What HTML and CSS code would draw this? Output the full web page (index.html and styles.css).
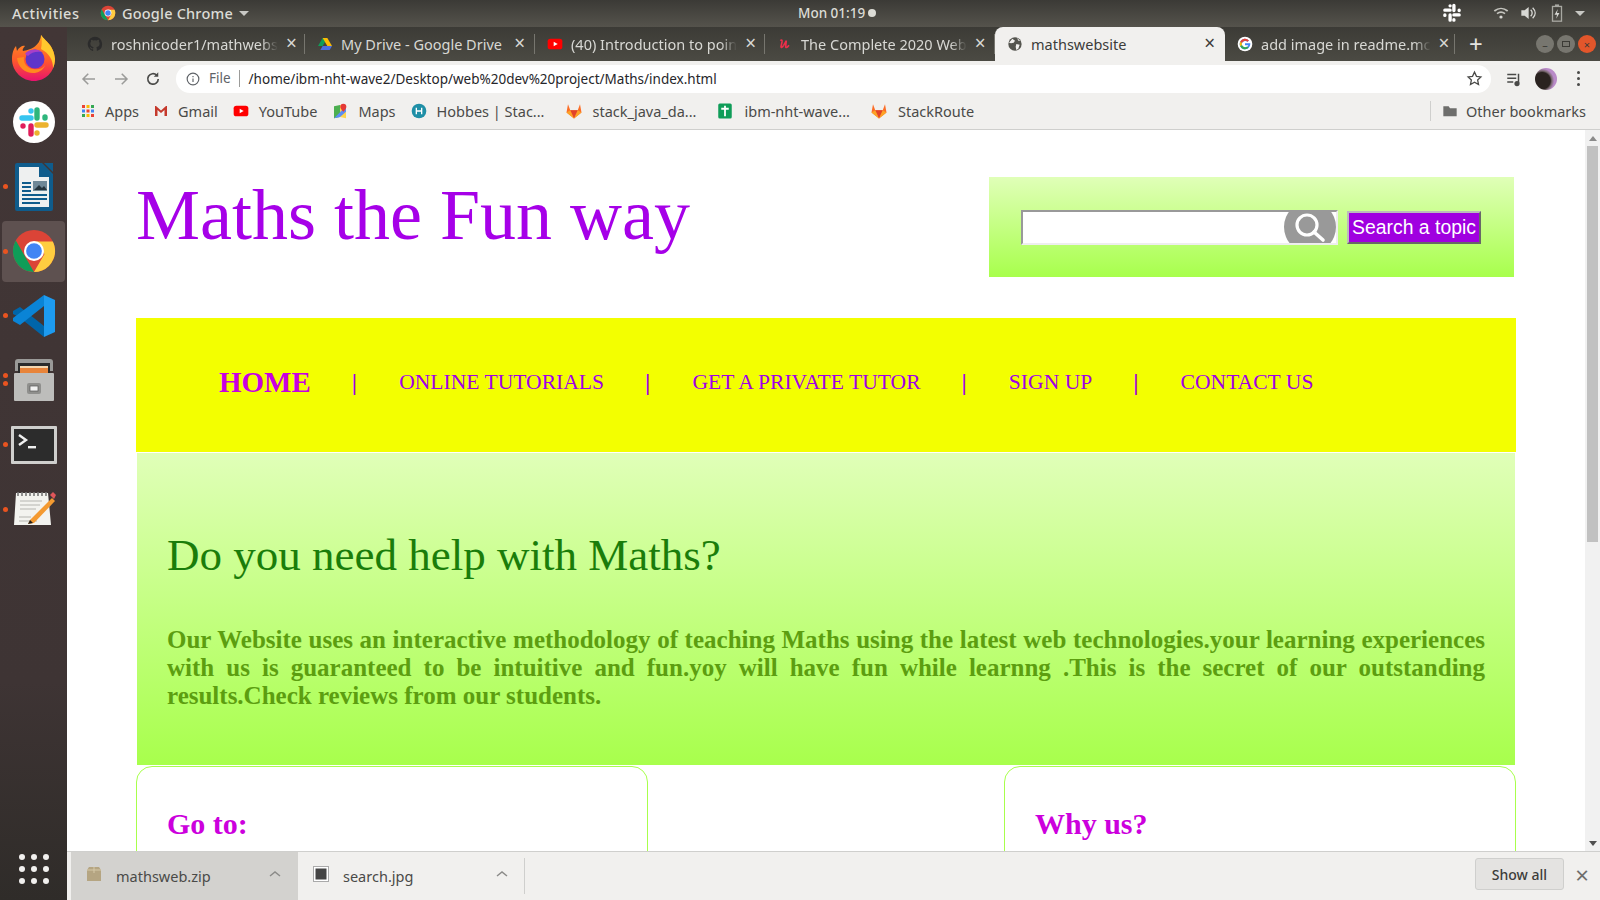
FILE: index.html
```html
<!DOCTYPE html>
<html lang="en">
<head>
    <meta charset="UTF-8">
    <meta name="viewport" content="width=device-width, initial-scale=1.0">
    <title>mathswebsite</title>
    <link rel="stylesheet" href="styles.css">
</head>
<body>
    <div class="topbar">
        <span class="activities">Activities</span>
        <span class="appmenu">
            <svg class="ico16" viewBox="0 0 24 24"><use href="#chrome"/></svg>
            Google Chrome
            <span class="caret"></span>
        </span>
        <span class="clock">Mon 01:19 <i class="dot"></i></span>
        <span class="tray">
            <svg width="20" height="20" viewBox="0 0 42 42"><g stroke="#fff" stroke-width="7" stroke-linecap="round" fill="none"><path d="M17 6v0M17 15H6"/><path d="M25 5v11M36 15v1"/><path d="M25 25h11M25 35v1"/><path d="M17 25v11M6 25v1"/></g></svg>
            <svg class="wifi" width="16" height="16" viewBox="0 0 24 24" fill="none" stroke="#c4c4be" stroke-width="2.6"><path d="M2 9c6-5 14-5 20 0M6 13c4-3 8-3 12 0"/><circle cx="12" cy="18" r="2.4" fill="#d8d8d4" stroke="none"/></svg>
            <svg class="volume" width="16" height="16" viewBox="0 0 24 24" fill="#d8d8d4"><path d="M2 8h5l6-5v18l-6-5H2z"/><path d="M16 7c3 3 3 7 0 10M19 4c5 5 5 11 0 16" fill="none" stroke="#d8d8d4" stroke-width="2"/></svg>
            <svg width="14" height="18" viewBox="0 0 14 22"><rect x="1.5" y="3" width="11" height="18" fill="none" stroke="#a8a8a2" stroke-width="1.6"/><rect x="4.5" y="0.5" width="5" height="3" fill="#a8a8a2"/><path d="M8 6l-4 7h3l-1 5 4-7H7z" fill="#d8d8d4"/></svg>
            <span class="caret"></span>
        </span>
    </div>

    <div class="desktop">
        <div class="dock">
            <div class="dockitem">
                <svg width="48" height="48" viewBox="0 0 48 48">
                    <defs><linearGradient id="fx" x1="0" y1="0" x2="0" y2="1"><stop offset="0" stop-color="#ff9a1f"/><stop offset=".55" stop-color="#ff5a2b"/><stop offset="1" stop-color="#e8126e"/></linearGradient></defs>
                    <path d="M31 1c4 6 13 10 14 24 0 13-10 22-21 22S2 38 2 25c0-6 2-11 4-13l1 5c2-4 6-6 8-5-2 2-3 4-2 5 6-1 17-4 18-16z" fill="url(#fx)"/>
                    <path d="M31 1c4 6 13 10 14 24 0 3-1 7-2 9 0-8-4-15-12-19 1-5 1-10 0-14z" fill="#ffc92e"/>
                    <circle cx="25" cy="25" r="9.5" fill="#5e35c8"/>
                    <path d="M15 20c3-5 12-6 17-2-5-1-11 0-14 4z" fill="#a83fc8"/>
                    <path d="M7 24c1 10 9 16 18 15 5-1 9-4 10-8-2 4-7 5-12 4-6-1-10-6-9-12z" fill="#ff8a1f"/>
                </svg>
            </div>
            <div class="dockitem">
                <svg width="42" height="42" viewBox="0 0 42 42">
                    <circle cx="21" cy="21" r="21" fill="#fff"/>
                    <g stroke-width="5.4" stroke-linecap="round" fill="none">
                        <path d="M18 10v0M18 17H9" stroke="#36c5f0"/>
                        <path d="M24 9v8M32 16v1" stroke="#2eb67d"/>
                        <path d="M24 24h9M24 32v0" stroke="#ecb22e"/>
                        <path d="M18 25v8M10 25v0" stroke="#e01e5a"/>
                    </g>
                </svg>
            </div>
            <div class="dockitem">
                <i class="run"></i>
                <svg width="40" height="50" viewBox="0 0 40 50">
                    <path d="M1 3a2 2 0 0 1 2-2h25l11 11v35a2 2 0 0 1-2 2H3a2 2 0 0 1-2-2z" fill="#0f5c8c"/>
                    <path d="M5 5h20v10h10v30H5z" fill="#eef0f0"/>
                    <path d="M30 1l9 0v9z" fill="#0f5c8c"/>
                    <rect x="19" y="19" width="14" height="10" fill="#6f8796"/><path d="M20 28l5-5 3 3 2-2 3 4z" fill="#26343c"/>
                    <path d="M8 21h9M8 25h9M8 29h9M8 33h25M8 37h25M8 41h18" stroke="#0f5c8c" stroke-width="2"/>
                </svg>
            </div>
            <div class="dockitem active">
                <i class="run"></i>
                <svg width="46" height="46" viewBox="0 0 24 24"><use href="#chrome"/></svg>
            </div>
            <div class="dockitem">
                <i class="run"></i>
                <svg width="44" height="44" viewBox="0 0 44 44">
                    <path d="M32 43V32L8 13l-7 4v3l6 3z" fill="#0065a9"/>
                    <path d="M32 1v11L8 31l-7-4v-3z" fill="#0a84d6"/>
                    <path d="M32 1l11 5v32l-11 5z" fill="#1d9bf0"/>
                </svg>
            </div>
            <div class="dockitem">
                <i class="run two"></i>
                <svg width="44" height="44" viewBox="0 0 44 44">
                    <path d="M3 4a3 3 0 0 1 3-3h32a3 3 0 0 1 3 3v9H3z" fill="#9a9a98"/>
                    <rect x="6" y="5" width="32" height="11" fill="#2b2b2b"/>
                    <rect x="8" y="8" width="28" height="7" fill="#e8843a"/><rect x="8" y="8" width="28" height="2" fill="#f4d7b0"/>
                    <rect x="2" y="15" width="40" height="28" rx="1" fill="#bdbdbb"/>
                    <rect x="15" y="25" width="14" height="11" rx="2" fill="#8f8f8d"/>
                    <rect x="18" y="28" width="8" height="5" fill="#f2f2f2" stroke="#555" stroke-width=".7"/>
                </svg>
            </div>
            <div class="dockitem">
                <i class="run"></i>
                <svg width="46" height="38" viewBox="0 0 46 38">
                    <rect width="46" height="38" rx="1" fill="#cfcfcd"/>
                    <rect x="3" y="3" width="40" height="32" fill="#2c2c2c"/>
                    <path d="M8 9l7 5-7 5" fill="none" stroke="#f0f0f0" stroke-width="2.4"/>
                    <rect x="17" y="20" width="8" height="2.4" fill="#f0f0f0"/>
                </svg>
            </div>
            <div class="dockitem">
                <i class="run"></i>
                <svg width="44" height="40" viewBox="0 0 44 40">
                    <path d="M4 4h32l3 32H2z" fill="#f3f3ef"/>
                    <path d="M6 3v4M10 3v4M14 3v4M18 3v4M22 3v4M26 3v4M30 3v4M34 3v4" stroke="#777" stroke-width="1.6"/>
                    <path d="M8 12h22M8 16h20M8 20h16M7 28h12M7 32h18" stroke="#b5b5b0" stroke-width="1"/>
                    <path d="M18 31l22-22 3 3-21 22-6 1z" fill="#f49a31"/>
                    <path d="M38 6l3-3 3 3-2 4z" fill="#e0565a"/>
                    <path d="M16 35l2-4 3 3z" fill="#222"/>
                </svg>
            </div>
            <div class="grid9">
                <i></i><i></i><i></i><i></i><i></i><i></i><i></i><i></i><i></i>
            </div>
        </div>

        <div class="browser">
            <div class="tabstrip">
                <div class="tab">
                    <svg class="ico16" viewBox="0 0 24 24"><path fill="#2b2b2b" d="M12 1a11 11 0 0 0-3.500 21.400c.5.100.7-.2.7-.5v-2c-3 .7-3.700-1.300-3.700-1.300-.5-1.300-1.200-1.600-1.200-1.600-1-.7.100-.7.100-.7 1.100.1 1.700 1.100 1.700 1.100 1 1.700 2.600 1.200 3.200.9.100-.7.400-1.200.7-1.500-2.400-.3-5-1.200-5-5.400 0-1.200.4-2.200 1.100-2.900-.1-.3-.5-1.400.1-2.900 0 0 .9-.3 3 1.100a10.500 10.500 0 0 1 5.500 0c2.100-1.400 3-1.100 3-1.100.6 1.500.2 2.600.1 2.900.7.700 1.100 1.700 1.100 2.900 0 4.200-2.600 5.100-5 5.400.4.300.8 1 .8 2v3c0 .3.200.6.700.5A11 11 0 0 0 12 1z"/></svg>
                    <span class="tabtitle">roshnicoder1/mathwebs</span>
                    <span class="tabx">×</span>
                </div>
                <div class="tab">
                    <svg class="ico16" viewBox="0 0 24 24"><path d="M8.500 3h7l-7 12h-7z" fill="#0f9d58"/><path d="M15.500 3l7 12h-7l-7-12z" fill="#fbbc04"/><path d="M5 21l3.500-6h14L19 21z" fill="#4a6ee0"/></svg>
                    <span class="tabtitle plain">My Drive - Google Drive</span>
                    <span class="tabx">×</span>
                </div>
                <div class="tab">
                    <svg class="ico16" viewBox="0 0 24 24"><rect x="1" y="4" width="22" height="16" rx="4" fill="#f00"/><path d="M10 8.500l6 3.500-6 3.500z" fill="#fff"/></svg>
                    <span class="tabtitle">(40) Introduction to poin</span>
                    <span class="tabx">×</span>
                </div>
                <div class="tab">
                    <svg class="ico16" viewBox="0 0 24 24"><path d="M5 7c2-2 3-1 2.500 2L6 16c0 2 2 1 4-2l4-7-1 9c0 2 2 2 5-2" fill="none" stroke="#ec2f4b" stroke-width="2.400"/></svg>
                    <span class="tabtitle">The Complete 2020 Web</span>
                    <span class="tabx">×</span>
                </div>
                <div class="tab current">
                    <svg class="ico16" viewBox="0 0 24 24"><circle cx="12" cy="12" r="10" fill="#55554f"/><path d="M8 4l4 3-2 3-4 1-3-1M14 12l5 1-2 6-3 2-1-5zM15 3l2 4 3 0" fill="#f1f0ee"/></svg>
                    <span class="tabtitle plain">mathswebsite</span>
                    <span class="tabx">×</span>
                </div>
                <div class="tab last">
                    <svg class="ico16" viewBox="0 0 24 24"><circle cx="12" cy="12" r="11" fill="#fff"/><path d="M12 11v3h5a5 5 0 1 1-1.300-5.200l2.200-2.200A8 8 0 1 0 20 12c0-.4 0-.7-.1-1z" fill="#4285f4"/><path d="M4.800 8.500l2.600 2a5 5 0 0 1 8.300-1.700l2.200-2.200a8 8 0 0 0-13.100 1.900z" fill="#ea4335"/><path d="M4.800 15.500a8 8 0 0 0 12.700 2.300l-2.400-2a5 5 0 0 1-7.700-2.300z" fill="#34a853"/><path d="M4.800 8.500a8 8 0 0 0 0 7l2.600-2a5 5 0 0 1 0-3z" fill="#fbbc04"/></svg>
                    <span class="tabtitle">add image in readme.mc</span>
                    <span class="tabx">×</span>
                </div>
                <span class="newtab">+</span>
                <span class="winbtns">
                    <i class="winbtn">–</i><i class="winbtn"><b class="winmax"></b></i><i class="winbtn close">×</i>
                </span>
            </div>

            <div class="toolbar">
                <svg class="navico" viewBox="0 0 24 24" fill="none" stroke="#9b9b99" stroke-width="2"><path d="M20 12H5M11 5l-7 7 7 7"/></svg>
                <svg class="navico" viewBox="0 0 24 24" fill="none" stroke="#9b9b99" stroke-width="2"><path d="M4 12h15M13 5l7 7-7 7"/></svg>
                <svg class="navico" viewBox="0 0 24 24" fill="none" stroke="#4a4a48" stroke-width="2.200"><path d="M19 12a7 7 0 1 1-2-5"/><path d="M19 3v6h-6" fill="#4a4a48" stroke="none"/></svg>
                <div class="omnibox">
                    <svg class="ico14" viewBox="0 0 24 24" fill="none" stroke="#5f6368" stroke-width="2"><circle cx="12" cy="12" r="10"/><path d="M12 11v6M12 7v2"/></svg>
                    <span class="scheme">File</span>
                    <span class="url">/home/ibm-nht-wave2/Desktop/web%20dev%20project/Maths/index.html</span>
                    <svg class="star" viewBox="0 0 24 24" fill="none" stroke="#4a4a48" stroke-width="1.800"><path d="M12 3l2.800 6 6.200.7-4.600 4.300 1.300 6.500L12 17.200 6.300 20.500l1.300-6.500L3 9.700 9.200 9z"/></svg>
                </div>
                <svg class="media" viewBox="0 0 24 24" fill="none" stroke="#4a4a48" stroke-width="2"><path d="M3 6h12M3 11h12M3 16h8M18 5v12"/><circle cx="16" cy="18" r="2.500" fill="#4a4a48"/></svg>
                <span class="avatar"></span>
                <span class="kebab"><i></i><i></i><i></i></span>
            </div>

            <div class="bookmarks">
                <span class="bm"><svg class="ico14" viewBox="0 0 14 14"><g><rect x="1" y="1" width="3" height="3" fill="#ea4335"/><rect x="5.500" y="1" width="3" height="3" fill="#fbbc04"/><rect x="10" y="1" width="3" height="3" fill="#34a853"/><rect x="1" y="5.500" width="3" height="3" fill="#4285f4"/><rect x="5.500" y="5.500" width="3" height="3" fill="#ea4335"/><rect x="10" y="5.500" width="3" height="3" fill="#4285f4"/><rect x="1" y="10" width="3" height="3" fill="#34a853"/><rect x="5.500" y="10" width="3" height="3" fill="#fbbc04"/><rect x="10" y="10" width="3" height="3" fill="#ea4335"/></g></svg>Apps</span>
                <span class="bm"><svg class="ico14" viewBox="0 0 14 14"><path d="M1 2v10h2.500V6L7 9l3.500-3v6H13V2h-1L7 6.500 2 2z" fill="#c5392c"/></svg>Gmail</span>
                <span class="bm"><svg class="ico16" viewBox="0 0 24 24"><rect x="1" y="4" width="22" height="16" rx="4" fill="#f00"/><path d="M10 8.500l6 3.500-6 3.500z" fill="#fff"/></svg>YouTube</span>
                <span class="bm"><svg class="ico16" viewBox="0 0 24 24"><path d="M3 5l9-2v18l-9 2z" fill="#4caf50"/><path d="M12 3l9 2v18l-9-2z" fill="#ffd54f"/><path d="M3 23l18-18v8l-9 8z" fill="#5c8df6"/><path d="M17 1a4.500 4.500 0 0 1 4.500 4.500C21.500 9 17 13 17 13s-4.500-4-4.500-7.500A4.500 4.500 0 0 1 17 1z" fill="#e53935"/></svg>Maps</span>
                <span class="bm wide"><svg class="ico16" viewBox="0 0 24 24"><circle cx="12" cy="12" r="11" fill="#1f8fa6"/><path d="M8 7v10M16 7v10M8 12h8" stroke="#fff" stroke-width="2"/></svg>Hobbes | Stac...</span>
                <span class="bm wide"><svg class="ico18" viewBox="0 0 24 24"><use href="#gitlab"/></svg>stack_java_da...</span>
                <span class="bm wide"><svg class="ico18" viewBox="0 0 24 24"><rect x="3" y="2" width="18" height="20" rx="2" fill="#0f9d58"/><path d="M12 5v14M7 9h10" stroke="#fff" stroke-width="2.400"/></svg>ibm-nht-wave...</span>
                <span class="bm"><svg class="ico18" viewBox="0 0 24 24"><use href="#gitlab"/></svg>StackRoute</span>
                <span class="otherbm"><svg class="ico16" viewBox="0 0 24 24"><path d="M2 5h8l2 3h10v12H2z" fill="#6e6e6c"/></svg>Other bookmarks</span>
            </div>

            <div class="viewport">
                <div class="page">
                    <div class="header">
                        <h1 class="logo">Maths the Fun way</h1>
                        <div class="searchbox">
                            <div class="searchfield">
                                <input class="searchinput" type="text">
                                <svg class="searchico" width="52" height="33" viewBox="0 0 52 33" fill="none" stroke="#fff">
                                    <circle cx="26" cy="17" r="26" fill="#999" stroke="none"/>
                                    <circle cx="23" cy="15" r="10" stroke-width="3.200"/>
                                    <path d="M30 22l9 8" stroke-width="3.600" stroke-linecap="round"/>
                                </svg>
                            </div>
                            <button class="searchbtn">Search a topic</button>
                        </div>
                    </div>

                    <ul class="nav">
                        <li class="navitem home">HOME</li>
                        <li class="navsep">|</li>
                        <li class="navitem">ONLINE TUTORIALS</li>
                        <li class="navsep">|</li>
                        <li class="navitem">GET A PRIVATE TUTOR</li>
                        <li class="navsep">|</li>
                        <li class="navitem">SIGN UP</li>
                        <li class="navsep">|</li>
                        <li class="navitem">CONTACT US</li>
                    </ul>

                    <div class="hero">
                        <h2 class="herotitle">Do you need help with Maths?</h2>
                        <p class="herotext">Our Website uses an interactive methodology of teaching Maths using the latest web technologies.your learning experiences with us is guaranteed to be intuitive and fun.yoy will have fun while learnng .This is the secret of our outstanding results.Check reviews from our students.</p>
                    </div>

                    <div class="cards">
                        <div class="card"><h3 class="cardtitle">Go to:</h3></div>
                        <div class="card"><h3 class="cardtitle">Why us?</h3></div>
                    </div>
                </div>
                <div class="scrollbar">
                    <span class="arrowup"></span>
                    <span class="thumb"></span>
                    <span class="arrowdown"></span>
                </div>
            </div>

            <div class="downloads">
                <div class="dl hover">
                    <svg class="ico16" viewBox="0 0 16 16"><path d="M1 4l2-3h10l2 3v11H1z" fill="#b5a582"/><path d="M1 4h14" stroke="#d6c9a8"/><path d="M8 1v6" stroke="#d6c9a8"/></svg>
                    <span class="dlname">mathsweb.zip</span>
                    <svg class="chev" viewBox="0 0 12 8" fill="none" stroke="#8b8b89" stroke-width="1.500"><path d="M1 6l5-4 5 4"/></svg>
                </div>
                <div class="dl">
                    <svg class="ico16" viewBox="0 0 16 16"><rect x=".5" y=".5" width="15" height="15" fill="#fff" stroke="#aaa"/><rect x="2.500" y="2.500" width="11" height="11" fill="#444"/></svg>
                    <span class="dlname">search.jpg</span>
                    <svg class="chev" viewBox="0 0 12 8" fill="none" stroke="#8b8b89" stroke-width="1.500"><path d="M1 6l5-4 5 4"/></svg>
                </div>
                <span class="dlsep"></span>
                <button class="showall">Show all</button>
                <span class="dlclose">×</span>
            </div>
        </div>
    </div>

    <svg class="defs" width="0" height="0">
        <defs>
            <g id="chrome">
                <circle cx="12" cy="12" r="11" fill="#db4437"/>
                <path d="M12 23a11 11 0 0 1-9.500-16.500L8 16l4 7z" fill="#0f9d58"/>
                <path d="M23 12a11 11 0 0 1-11 11l5.500-9.500L12 7h9.800c.8 1.500 1.200 3.200 1.200 5z" fill="#ffcd40"/>
                <circle cx="12" cy="12" r="5.200" fill="#fff"/>
                <circle cx="12" cy="12" r="4.100" fill="#4285f4"/>
            </g>
            <g id="gitlab">
                <path d="M12 22L2 14l2-11 3 8h10l3-8 2 11z" fill="#fc6d26"/>
                <path d="M12 22L7 11h10z" fill="#e24329"/>
                <path d="M2 14l5-3 5 11zM22 14l-5-3-5 11z" fill="#fca326"/>
            </g>
        </defs>
    </svg>
</body>
</html>
```

FILE: styles.css
```css
*
{
    box-sizing: border-box;
}

body
{
    margin: 0;
    width: 1600px;
    height: 900px;
    overflow: hidden;
    display: flex;
    flex-direction: column;
    font-family: "Noto Sans", sans-serif;
    background: #3f3434;
}

.defs
{
    display: none;
}

.ico14
{
    width: 14px;
    height: 14px;
    flex: none;
}

.ico16
{
    width: 16px;
    height: 16px;
    flex: none;
}

.ico18
{
    width: 18px;
    height: 18px;
    flex: none;
}

/* top panel */
.topbar
{
    height: 27px;
    flex: none;
    display: flex;
    align-items: center;
    padding: 0 12px 1px 12px;
    position: relative;
    background: linear-gradient(#3b3a36, #55534c);
    color: #dcdcd6;
    font-size: 14.5px;
    font-weight: 500;
}

.activities
{
    width: 88px;
    letter-spacing: 0.5px;
}

.appmenu
{
    display: flex;
    align-items: center;
    gap: 6px;
    letter-spacing: 0.2px;
}

.caret
{
    display: inline-block;
    border-left: 5px solid transparent;
    border-right: 5px solid transparent;
    border-top: 5px solid #c8c8c4;
}

.clock
{
    position: absolute;
    left: 798px;
    display: flex;
    align-items: center;
    gap: 3px;
    font-size: 13.5px;
}

.dot
{
    width: 8px;
    height: 8px;
    border-radius: 50%;
    background: #dcdcd6;
}

.tray
{
    margin-left: auto;
    margin-right: 3px;
    display: flex;
    align-items: center;
    gap: 11px;
}

.wifi
{
    margin-left: 20px;
}

.volume
{
    margin-right: 3px;
}

.desktop
{
    flex: 1;
    display: flex;
    min-height: 0;
}

/* launcher */
.dock
{
    width: 67px;
    flex: none;
    display: flex;
    flex-direction: column;
    align-items: center;
    background: linear-gradient(#423636 0, #3e3434 75%, #2f2c29 100%);
}

.dockitem
{
    width: 63px;
    height: 61px;
    margin-bottom: 3.5px;
    position: relative;
    display: flex;
    align-items: center;
    justify-content: center;
    border-radius: 4px;
}

.dockitem.active
{
    background: #5e5150;
}

.run
{
    position: absolute;
    left: 1px;
    top: 28px;
    width: 5px;
    height: 5px;
    border-radius: 50%;
    background: #e95420;
}

.run.two
{
    box-shadow: 0 8px 0 #e95420;
    top: 23px;
}

.grid9
{
    margin-top: auto;
    margin-bottom: 16px;
    display: grid;
    grid-template-columns: repeat(3, 6px);
    gap: 6px 6px;
}

.grid9 i
{
    width: 6px;
    height: 6px;
    border-radius: 50%;
    background: #f1f0ee;
}

/* chrome */
.browser
{
    flex: 1;
    min-width: 0;
    display: flex;
    flex-direction: column;
    background: #fff;
}

.tabstrip
{
    height: 34px;
    flex: none;
    display: flex;
    padding-left: 8px;
    background: linear-gradient(#3c3b36, #4b4a43);
    position: relative;
}

.tab
{
    width: 230px;
    display: flex;
    align-items: center;
    gap: 8px;
    padding: 0 10px 1px 12px;
    color: #d8d8d4;
    font-size: 14.5px;
    position: relative;
}

.tab::after
{
    content: "";
    position: absolute;
    right: 0;
    top: 7px;
    bottom: 7px;
    width: 1px;
    background: #77766f;
}

.tab.current
{
    background: #f1f0ee;
    color: #3c3c3a;
    border-radius: 8px 8px 0 0;
}

.tab.current::after
{
    display: none;
}

.tabtitle
{
    flex: 1;
    white-space: nowrap;
    -webkit-mask-image: linear-gradient(90deg, #000 90%, transparent);
    mask-image: linear-gradient(90deg, #000 90%, transparent);
}

.tabtitle.plain
{
    -webkit-mask-image: none;
    mask-image: none;
}

.tabx
{
    font-size: 19px;
    line-height: 1;
}

.newtab
{
    margin-left: 14px;
    width: 16px;
    color: #e4e4e0;
    font-size: 24px;
    line-height: 34px;
}

.winbtns
{
    position: absolute;
    right: 4px;
    top: 8px;
    display: flex;
    gap: 3px;
}

.winbtn
{
    width: 18px;
    height: 18px;
    border-radius: 50%;
    display: flex;
    align-items: center;
    justify-content: center;
    background: #77766f;
    color: #3c3b36;
    font-size: 11px;
    font-style: normal;
}

.winmax
{
    width: 8px;
    height: 6px;
    border: 1px solid #3c3b36;
}

.winbtn.close
{
    background: #e2562b;
}

.toolbar
{
    height: 35px;
    flex: none;
    display: flex;
    align-items: center;
    padding-left: 13px;
    background: #f1f0ee;
}

.navico
{
    width: 18px;
    height: 18px;
    margin-right: 14px;
    flex: none;
}

.omnibox
{
    width: 1315px;
    height: 28px;
    display: flex;
    align-items: center;
    padding: 0 8px 0 10px;
    background: #fff;
    border-radius: 14px;
    font-size: 13.5px;
    flex: none;
}

.scheme
{
    margin-left: 9px;
    padding-right: 8px;
    border-right: 1px solid #9b9b99;
    color: #5f6368;
    line-height: 17px;
}

.url
{
    margin-left: 9px;
    color: #26262a;
}

.star
{
    width: 17px;
    height: 17px;
    margin-left: auto;
}

.media
{
    width: 18px;
    height: 18px;
    margin-left: 14px;
    flex: none;
}

.avatar
{
    width: 22px;
    height: 22px;
    margin-left: 12px;
    flex: none;
    border-radius: 50%;
    background: radial-gradient(circle at 32% 58%, #2a2320 0 42%, #7b6a72 50%, #b98ac8 62%);
}

.kebab
{
    margin-left: 20px;
    display: flex;
    flex-direction: column;
    gap: 3px;
}

.kebab i
{
    width: 3px;
    height: 3px;
    border-radius: 50%;
    background: #4a4a48;
}

.bookmarks
{
    height: 34px;
    flex: none;
    display: flex;
    align-items: center;
    padding: 0 0 3px 14px;
    background: #f1f0ee;
    border-bottom: 1px solid #cfcfcd;
    color: #4a4a48;
    font-size: 14.5px;
}

.bm
{
    display: flex;
    align-items: center;
    gap: 10px;
    margin-right: 15px;
    white-space: nowrap;
}

.bm.wide
{
    margin-right: 20px;
}

.otherbm
{
    margin-left: auto;
    margin-right: 14px;
    height: 20px;
    padding-left: 11px;
    display: flex;
    align-items: center;
    gap: 8px;
    border-left: 1px solid #cfcfcd;
}

/* the page itself */
.viewport
{
    flex: 1;
    min-height: 0;
    display: flex;
    overflow: hidden;
}

.page
{
    flex: 1;
    min-width: 0;
    padding: 47px 69px 0 69px;
    font-family: "Liberation Serif", serif;
}

.header
{
    display: flex;
    align-items: flex-start;
    justify-content: space-between;
    height: 141px;
    padding-right: 2px;
}

.logo
{
    margin: 0;
    font-size: 72px;
    font-weight: normal;
    line-height: 76px;
    color: #a600e8;
}

.searchbox
{
    width: 525px;
    height: 100px;
    display: flex;
    align-items: center;
    padding: 0 33px 0 32px;
    gap: 9px;
    background: linear-gradient(#e0ffb8, #a8ff4c);
}

.searchfield
{
    width: 317px;
    height: 35px;
    display: flex;
    background: #fff;
    border-top: 2px solid #999;
    border-left: 2px solid #999;
    border-bottom: 2px solid #eee;
    border-right: 2px solid #eee;
}

.searchinput
{
    flex: 1;
    min-width: 0;
    border: none;
    outline: none;
    background: transparent;
}

.searchico
{
    flex: none;
    margin: -2px 0 0 0;
}

.searchbtn
{
    width: 134px;
    height: 33px;
    padding: 0;
    border: 2px outset #bbb;
    background: #a000e0;
    color: #fff;
    font-family: "Liberation Sans", sans-serif;
    font-size: 19.4px;
}

.nav
{
    height: 134px;
    margin: 0;
    padding: 0 0 6px 83px;
    display: flex;
    align-items: center;
    gap: 42px;
    list-style: none;
    background: #f3ff00;
    color: #a000e6;
    font-size: 21.6px;
}

.navitem.home
{
    font-size: 29px;
    font-weight: bold;
    color: #c800e0;
}

.navsep
{
    margin-left: -1px;
    font-size: 24px;
    font-weight: bold;
}

.hero
{
    height: 312px;
    margin: 1px 1px 0 1px;
    padding: 76px 30px 0 30px;
    background: linear-gradient(#e0ffb8, #a8ff4c);
}

.herotitle
{
    margin: 0;
    font-size: 45px;
    font-weight: normal;
    line-height: 53px;
    color: #1a7d0a;
}

.herotext
{
    margin: 44px 0 0 0;
    font-size: 25px;
    font-weight: bold;
    line-height: 28px;
    text-align: justify;
    color: #5c9e10;
}

.cards
{
    display: flex;
    justify-content: space-between;
    margin-top: 1px;
}

.card
{
    width: 512px;
    height: 240px;
    padding: 40px 30px;
    border: 1px solid #a8ff4c;
    border-radius: 16px;
}

.cardtitle
{
    margin: 0;
    font-size: 30px;
    line-height: 34px;
    color: #cc00dd;
}

.scrollbar
{
    width: 15px;
    flex: none;
    position: relative;
    background: #f1f1f1;
}

.thumb
{
    position: absolute;
    left: 2px;
    right: 2px;
    top: 16px;
    height: 396px;
    background: #c1c1c1;
}

.arrowup
{
    position: absolute;
    left: 4px;
    top: 6px;
    border-left: 4px solid transparent;
    border-right: 4px solid transparent;
    border-bottom: 5px solid #8a8a8a;
}

.arrowdown
{
    position: absolute;
    left: 4px;
    bottom: 5px;
    border-left: 4px solid transparent;
    border-right: 4px solid transparent;
    border-top: 5px solid #505050;
}

/* download shelf */
.downloads
{
    height: 49px;
    flex: none;
    display: flex;
    align-items: center;
    padding-left: 4px;
    background: #f1f0ee;
    border-top: 1px solid #cfcfcd;
    color: #4a4a48;
    font-size: 14.5px;
}

.dl
{
    width: 227px;
    height: 48px;
    display: flex;
    align-items: center;
    gap: 14px;
    padding: 0 17px 0 15px;
}

.dl.hover
{
    background: #d3d2cf;
}

.dl .ico16,
.chev
{
    margin-top: -4px;
}

.dlname
{
    flex: 1;
}

.dlsep
{
    width: 1px;
    height: 36px;
    margin-left: -1px;
    background: #cfcfcd;
}

.chev
{
    width: 12px;
    height: 8px;
}

.showall
{
    width: 89px;
    height: 32px;
    margin-left: auto;
    margin-bottom: 4px;
    border: 1px solid #cfcfcd;
    border-radius: 3px;
    background: #e4e3e1;
    color: #3c3c3a;
    font-family: "Noto Sans", sans-serif;
    font-size: 14px;
    font-weight: 500;
}

.dlclose
{
    width: 36px;
    margin-bottom: 4px;
    color: #6e6e6c;
    font-size: 24px;
    text-align: center;
}
```
